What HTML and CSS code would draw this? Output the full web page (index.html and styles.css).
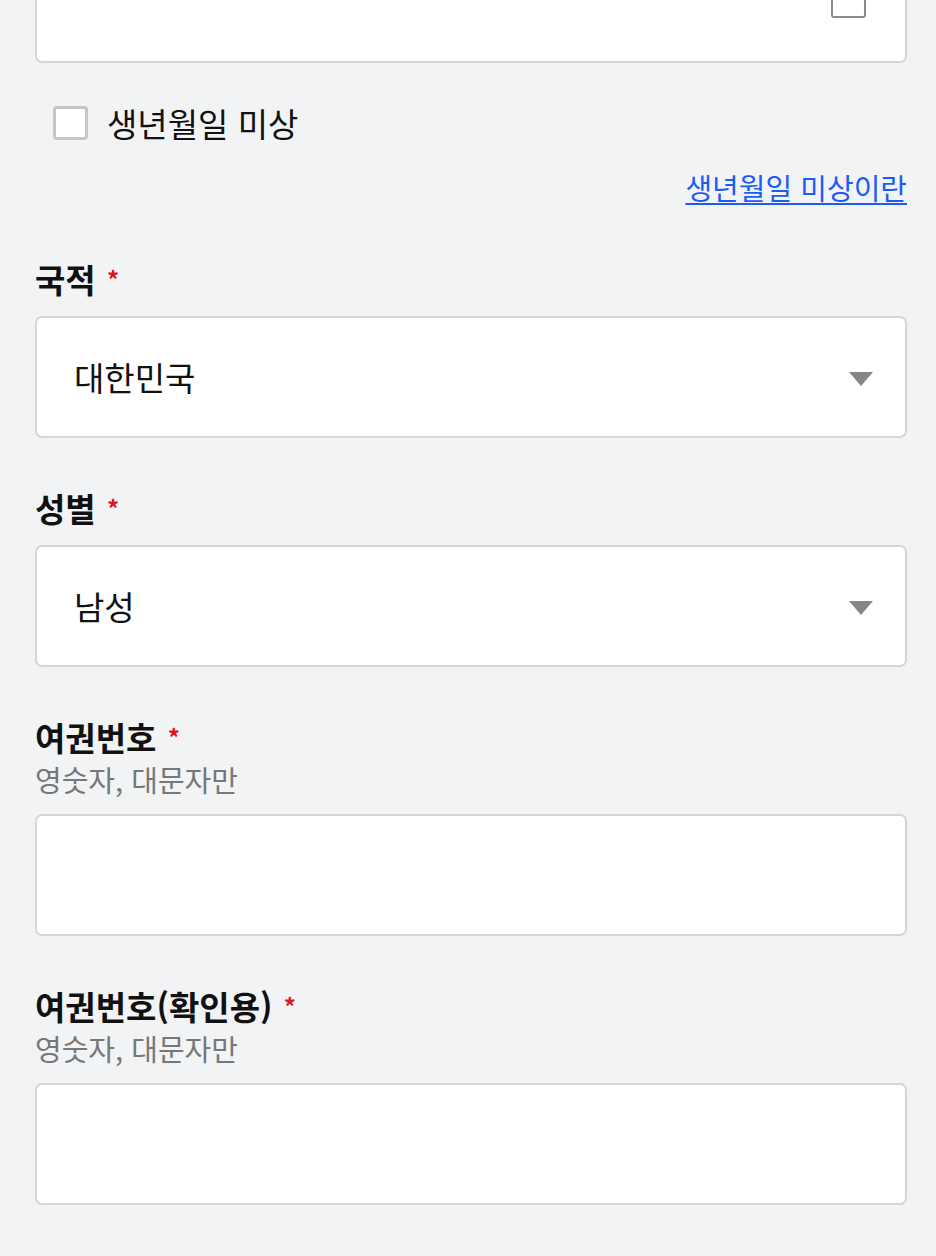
FILE: index.html
```html
<!DOCTYPE html>
<html lang="ko">
<head>
<meta charset="utf-8">
<link rel="stylesheet" href="styles.css">
</head>
<body>
<div class="form">
  <div class="box box-top">
    <span class="mini-box"></span>
  </div>
  <label class="check-row">
    <span class="check"></span>
    <span class="check-label">생년월일 미상</span>
  </label>
  <div class="link-row"><a class="link" href="#">생년월일 미상이란</a></div>

  <div class="field">
    <div class="label">국적 <span class="req">*</span></div>
    <div class="box select"><span class="value">대한민국</span><span class="caret"></span></div>
  </div>

  <div class="field">
    <div class="label">성별 <span class="req">*</span></div>
    <div class="box select"><span class="value">남성</span><span class="caret"></span></div>
  </div>

  <div class="field">
    <div class="label">여권번호 <span class="req">*</span></div>
    <div class="hint">영숫자, 대문자만</div>
    <div class="box"></div>
  </div>

  <div class="field">
    <div class="label">여권번호(확인용) <span class="req">*</span></div>
    <div class="hint">영숫자, 대문자만</div>
    <div class="box"></div>
  </div>
</div>
</body>
</html>
```

FILE: styles.css
```css
html, body {
  margin: 0;
  padding: 0;
  background: #f2f3f5;
}
body {
  font-family: "Noto Sans CJK KR", "Noto Sans", sans-serif;
  color: #111;
  overflow: hidden;
}
.form {
  padding: 0 29px 0 35px;
  display: flex;
  flex-direction: column;
}
.box {
  box-sizing: border-box;
  height: 122px;
  background: #fff;
  border: 2px solid #d6d6d6;
  border-radius: 7px;
}
.box-top {
  margin-top: -59px;
  display: flex;
  justify-content: flex-end;
  align-items: flex-start;
  padding-right: 39px;
}
.mini-box {
  display: block;
  width: 35px;
  height: 40px;
  margin-top: 35px;
  box-sizing: border-box;
  border: 2px solid #8a8a8a;
  border-radius: 3px;
}
.check-row {
  display: flex;
  align-items: center;
  margin-top: 43px;
  padding-left: 18px;
  gap: 19px;
  height: 34px;
}
.check {
  width: 35px;
  height: 34px;
  box-sizing: border-box;
  border: 3px solid #c6c6c6;
  border-radius: 4px;
  background: #fff;
}
.check-label {
  font-size: 33px;
  line-height: 34px;
  color: #111;
}
.link-row {
  display: flex;
  justify-content: flex-end;
  margin-top: 27px;
}
.link {
  font-size: 29px;
  line-height: 40px;
  color: #1b5cf5;
  text-decoration: underline;
  text-decoration-thickness: 2px;
  text-underline-offset: 3px;
}
.field {
  display: flex;
  flex-direction: column;
  margin-top: 50px;
}
.field + .field {
  margin-top: 48px;
}
.label {
  font-size: 33px;
  line-height: 44px;
  font-weight: 700;
  color: #111;
  margin-bottom: 15px;
}
.req {
  color: #e0141e;
  font-size: 24px;
  vertical-align: 4px;
  margin-left: 2px;
}
.hint {
  font-size: 29px;
  line-height: 36px;
  color: #777;
  margin-top: -13px;
  margin-bottom: 17px;
}
.select {
  display: flex;
  align-items: center;
  justify-content: space-between;
  padding: 0 32px 0 37px;
}
.value {
  font-size: 33px;
  color: #111;
}
.caret {
  width: 0;
  height: 0;
  margin-top: 4px;
  border-left: 12px solid transparent;
  border-right: 12px solid transparent;
  border-top: 14px solid #858585;
}
```
